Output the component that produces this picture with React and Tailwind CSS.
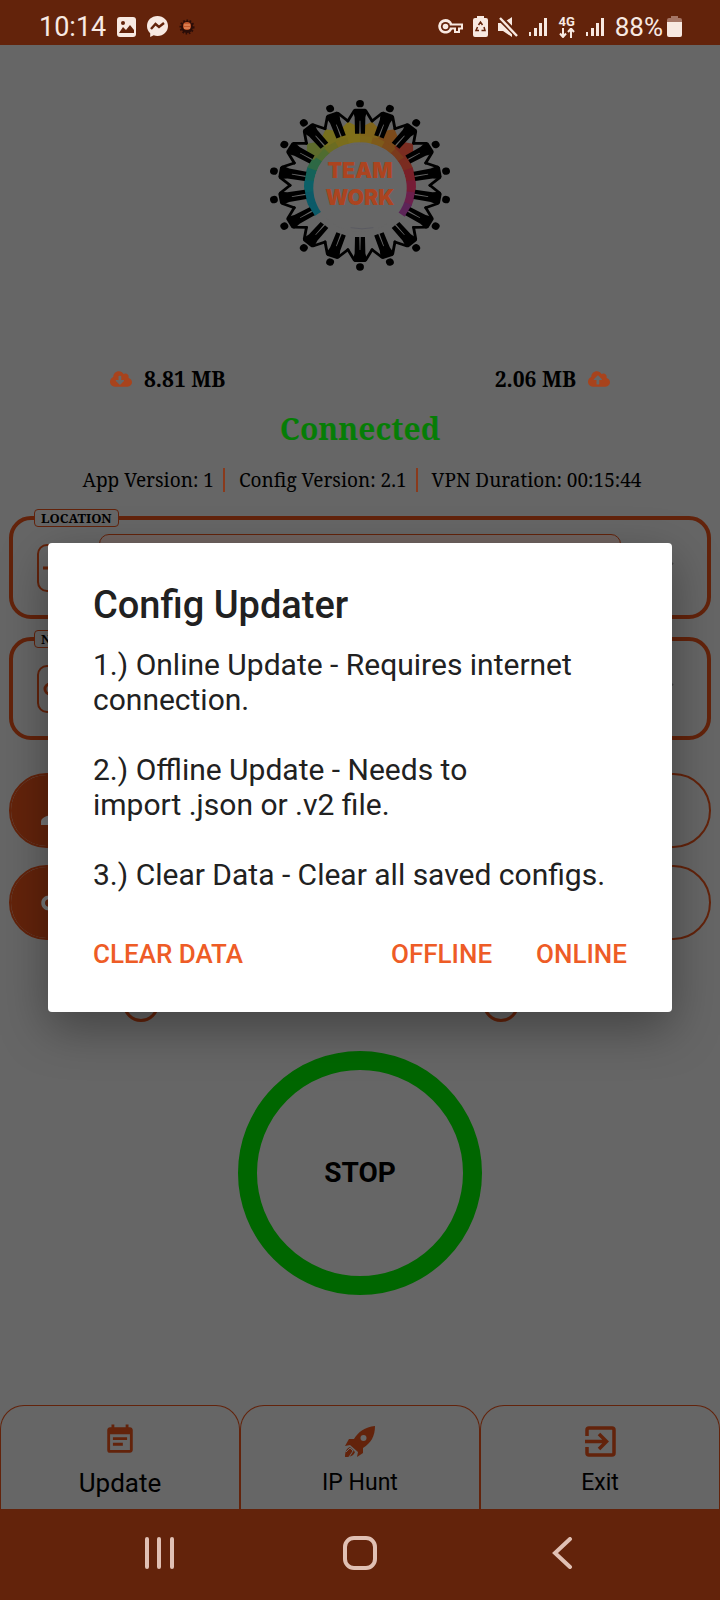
import React, { useState } from "react";
import { MdKey, MdPerson, MdEventNote } from "react-icons/md";
import { FaCloudDownloadAlt, FaCloudUploadAlt } from "react-icons/fa";

const people = Array.from({ length: 18 }, (_, i) => i * 20);

// rainbow ring, clockwise from lower left to lower right
const ringColors = [
  "#0b5a68", "#0b5a68", "#0b6068", "#146259", "#2d6844", "#4f6c30",
  "#6b6c22", "#7a6d1c", "#80701a", "#80681a", "#7e5a1a", "#7c4a1a",
  "#7a3a1c", "#7a2c20", "#7a1f28", "#761c36", "#6c1f4c", "#5c2458",
];

function polar(deg, r) {
  const a = (deg * Math.PI) / 180;
  return `${(Math.sin(a) * r).toFixed(1)} ${(-Math.cos(a) * r).toFixed(1)}`;
}

function Logo() {
  return (
    <svg width="183" height="177" viewBox="-273 -265 549 531">
      <g transform="scale(1.07 1)">
        {ringColors.map((color, i) => {
          const from = -126 + i * 14;
          return (
            <path
              key={i}
              d={`M${polar(from, 143)} A143 143 0 0 1 ${polar(from + 15, 143)}`}
              stroke={color}
              strokeWidth="28"
              fill="none"
            />
          );
        })}
        {[-50, -30, -10, 10, 30, 50].map((deg, i) => (
          <path
            key={deg}
            d={`M${polar(deg - 10, 150)} L${polar(deg - 7, 178)} L${polar(deg, 194)} L${polar(deg + 7, 178)} L${polar(deg + 10, 150)}Z`}
            fill={["#5d6b2c", "#77701e", "#80701a", "#80641a", "#7c4a1a", "#7a2c20"][i]}
          />
        ))}
        <circle cx="0" cy="8" r="131" fill="#666666" />
        {people.map((deg) => (
          <g key={deg} transform={`rotate(${deg})`}>
            <circle cx="0" cy="-245" r="11" fill="#000" />
            <path
              d="M-15 -230 H15 L20 -224 L15 -204 L14 -155 H2 L1 -194 H-1 L-2 -155 H-14 L-15 -204 L-20 -224Z"
              fill="#000"
            />
            <path
              d="M-34 -193 L-16 -224 M16 -224 L34 -193"
              stroke="#000"
              strokeWidth="8"
              strokeLinecap="round"
            />
          </g>
        ))}
      </g>
      <path d="M-28 127 Q6 134 40 127" stroke="#55555f" strokeWidth="2" fill="none" />
      <g
        className="font-['Inter',sans-serif] font-black"
        fontSize="64"
        fill="#ac4420"
        textAnchor="middle"
      >
        <text x="0" y="-22">TEAM</text>
        <text x="0" y="60">WORK</text>
      </g>
    </svg>
  );
}

function SignalIcon() {
  return (
    <svg width="19" height="20" viewBox="0 0 19 20" fill="#f8e9e2">
      <rect x="0" y="15" width="2" height="4" />
      <rect x="5" y="11" width="3" height="8" />
      <rect x="10" y="6" width="3" height="13" />
      <rect x="15" y="1" width="3" height="18" />
    </svg>
  );
}

function StatusBar() {
  return (
    <header className="flex h-[45px] items-center justify-between bg-[#63230b] pt-2 pr-[38px] pl-[39px] text-[27px] leading-8 text-[#f8e9e2]">
      <div className="flex items-center gap-[11px]">
        <span>10:14</span>
        <svg width="19" height="20" viewBox="0 0 19 20">
          <rect width="19" height="20" rx="3" fill="#f8e9e2" />
          <circle cx="6" cy="6" r="2" fill="#63230b" />
          <path d="M2 16 L6 10 L9 13 L13 8 L17 13 V16Z" fill="#63230b" />
        </svg>
        <svg width="21" height="21" viewBox="0 0 21 21">
          <path
            d="M10.500 0C4.500 0 0 4.300 0 10c0 3 1.200 5.400 3.200 7.200V21l3.500-1.700c1.200.4 2.500.6 3.800.6 6 0 10.500-4.300 10.500-9.900S16.500 0 10.500 0Z"
            fill="#f8e9e2"
          />
          <path d="M4 13 L8.500 8 L12 11 L17 7" stroke="#63230b" strokeWidth="2.400" fill="none" />
        </svg>
        <svg width="16" height="16" viewBox="-8 -8 16 16">
          <circle r="6" fill="#2a0d08" stroke="#2a0d08" strokeWidth="3" strokeDasharray="1.500 1.500" />
          <circle cy="-1" r="4" fill="#c4582c" />
          <path d="M-3 -2H3M-3 1H3" stroke="#f0a070" strokeWidth="1" />
        </svg>
      </div>
      <div className="flex items-center gap-[10px]">
        <svg width="25" height="15" viewBox="0 0 25 15">
          <path
            d="M7.500 0a7.300 7.300 0 1 0 6.600 10.500H16V14h6v-3.500h3V4.500H14.100A7.300 7.300 0 0 0 7.500 0Z"
            fill="#f8e9e2"
          />
          <path d="M12 6.500H23V8.500H20V12H18V8.500H12Z" fill="#63230b" />
          <circle cx="7.500" cy="7.500" r="4.600" fill="#63230b" />
          <circle cx="7.500" cy="7.500" r="2.800" fill="#f8e9e2" />
        </svg>
        <svg width="15" height="21" viewBox="0 0 15 21">
          <path d="M4 0H11V2H13Q15 2 15 4V19Q15 21 13 21H2Q0 21 0 19V4Q0 2 2 2H4Z" fill="#f8e9e2" />
          <path
            d="M5.500 9 L7.500 6 L9.500 9 M11 11 L12 14.500 H8.500 M6 14.500 H3 L4.500 11"
            stroke="#63230b"
            strokeWidth="1.500"
            fill="none"
          />
        </svg>
        <svg width="21" height="20" viewBox="0 0 21 20">
          <path d="M0 6H5L14 0V20L5 14H0Z" fill="#f8e9e2" />
          <path d="M1 0 L20 19" stroke="#63230b" strokeWidth="6" />
          <path d="M2 1 L19 19" stroke="#f8e9e2" strokeWidth="2.400" />
        </svg>
        <SignalIcon />
        <div className="flex flex-col items-center">
          <span className="text-[13px] leading-3 font-bold">4G</span>
          <svg width="18" height="10" viewBox="0 0 18 10">
            <path
              d="M5 0V9M2 5.500L5 9L8 5.500M13 10V1M10 4L13 0.500L16 4"
              stroke="#f8e9e2"
              strokeWidth="2"
              fill="none"
            />
          </svg>
        </div>
        <SignalIcon />
        <div className="flex items-center gap-1">
          <span className="text-[26px]">88%</span>
          <svg width="15" height="21" viewBox="0 0 15 21">
            <path d="M4 0H11V2H13Q15 2 15 4V7H0V4Q0 2 2 2H4Z" fill="#a57565" />
            <path d="M0 6H15V19Q15 21 13 21H2Q0 21 0 19Z" fill="#f8e9e2" />
          </svg>
        </div>
      </div>
    </header>
  );
}

function SelectCard({ label, id, children }) {
  return (
    <div className="relative flex h-[103px] items-center rounded-[22px] border-4 border-[#63230b] px-6">
      <label
        htmlFor={id}
        className="absolute -top-[11px] left-[21px] rounded-[4px] border border-[#63230b] bg-[#666666] px-[6px] font-['Noto_Serif','DejaVu_Serif_Condensed','DejaVu_Serif',serif] text-[13px] leading-4 font-bold"
      >
        {label}
      </label>
      <div className="flex h-12 w-12 items-center justify-center rounded-[10px] border-2 border-[#63230b] text-[#63230b]">
        {children}
      </div>
      <select
        id={id}
        className="mr-[62px] ml-[14px] h-[68px] flex-1 appearance-none rounded-[10px] border border-[#63230b] bg-[#6f6360]"
      />
      <svg className="absolute right-[33px]" width="26" height="14" viewBox="0 0 26 14">
        <path d="M2 12 L13 12 L25 2" stroke="#444" strokeWidth="2" fill="none" />
      </svg>
    </div>
  );
}

function RoundField({ name, icon }) {
  return (
    <div className="flex h-[75px] overflow-hidden rounded-full border-2 border-[#63230b] bg-[#666666]">
      <div className="-my-px -ml-px flex w-[90px] items-center justify-center bg-[#63230b] text-[#777777]">
        {icon}
      </div>
      <input className="min-w-0 flex-1 bg-transparent" type="text" aria-label={name} />
    </div>
  );
}

function UpdateDialog({ onClose }) {
  return (
    <div className="absolute inset-0 flex items-center px-12">
      <div
        role="dialog"
        aria-labelledby="dialog-title"
        className="w-full rounded-[4px] bg-white px-[45px] pt-10 pb-8 text-[#212121] shadow-[0_16px_48px_rgba(0,0,0,0.35)]"
      >
        <h2 id="dialog-title" className="text-[38px] leading-[44px] font-medium">
          Config Updater
        </h2>
        <div className="mt-5 text-[30px] leading-[35px]">
          <p>
            1.) Online Update - Requires internet connection.
          </p>
          <p className="mt-[35px]">
            2.) Offline Update - Needs to
            <br />
            import .json or .v2 file.
          </p>
          <p className="mt-[35px]">3.) Clear Data - Clear all saved configs.</p>
        </div>
        <div className="mt-9 flex items-center text-[26px] leading-[52px] font-medium text-[#ee5c26]">
          <button type="button" onClick={onClose}>CLEAR DATA</button>
          <button type="button" className="ml-auto" onClick={onClose}>OFFLINE</button>
          <button type="button" className="ml-11" onClick={onClose}>ONLINE</button>
        </div>
      </div>
    </div>
  );
}

function RocketIcon() {
  return (
    <svg width="31" height="31" viewBox="0 0 31 31">
      <path
        d="M30 0C20 1 13 6 9 13L4 13L0 20L5 19L13 26L12 31L18 27V22C26 17 30 10 30 0Z"
        fill="#63230b"
      />
      <circle cx="18.500" cy="12" r="3" fill="#666666" />
      <path
        d="M5 21C2 22 0 25 0 31C6 31 9 29 10 26"
        fill="#63230b"
      />
      <path d="M1 26L5 22L8 25L4 31" stroke="#666666" strokeWidth="1" fill="none" />
    </svg>
  );
}

function ExitIcon() {
  return (
    <svg width="31" height="31" viewBox="0 0 31 31" fill="none" stroke="#63230b" strokeWidth="3.500">
      <path d="M2 10V4Q2 2 4 2H27Q29 2 29 4V27Q29 29 27 29H4Q2 29 2 27V21" />
      <path d="M0 15.500H21M14 8L21.500 15.500L14 23" />
    </svg>
  );
}

const tabClass =
  "flex flex-1 flex-col items-center justify-end rounded-t-[24px] border border-b-0 border-[#63230b] pb-[10px] leading-8";

function App() {
  const [open, setOpen] = useState(true);

  return (
    <div className="flex min-h-screen flex-col bg-[#666666] font-['Roboto',sans-serif] text-black">
      <StatusBar />

      <div className="relative flex flex-1 flex-col">
        <main className="flex flex-1 flex-col px-[9px]">
          <div className="flex justify-center pt-[52px]">
            <Logo />
          </div>

          <div className="font-['Noto_Serif','DejaVu_Serif_Condensed','DejaVu_Serif',serif]">
            <div className="mt-[91px] flex justify-between px-[101px] text-[21px] leading-7 font-bold">
              <div className="flex items-center gap-3">
                <FaCloudDownloadAlt size={22} color="#a8431c" />
                <span>8.81 MB</span>
              </div>
              <div className="flex items-center gap-3">
                <span>2.06 MB</span>
                <FaCloudUploadAlt size={22} color="#a8431c" />
              </div>
            </div>
            <h1 className="mt-4 text-center text-[30px] leading-10 font-bold text-[#067d06]">
              Connected
            </h1>
            <div className="mt-[17px] flex items-center justify-center pl-1 text-[19px] leading-7">
              <span className="border-r-2 border-[#8a3a1c] pr-[9px] leading-6">App Version: 1</span>
              <span className="border-r-2 border-[#8a3a1c] pr-[9px] pl-[14px] leading-6">Config Version: 2.1</span>
              <span className="pl-[14px]">VPN Duration: 00:15:44</span>
            </div>
          </div>

          <div className="mt-[22px] flex flex-col gap-[18px]">
            <SelectCard label="LOCATION" id="location">
              <svg width="36" height="36" viewBox="0 0 36 36" stroke="currentColor" strokeWidth="3" fill="none">
                <path d="M0 18H36M18 0V36" />
                <circle cx="18" cy="18" r="11" />
              </svg>
            </SelectCard>
            <SelectCard label="NETWORK" id="network">
              <svg width="36" height="36" viewBox="0 0 36 36" stroke="currentColor" strokeWidth="3" fill="none">
                <circle cx="7" cy="18" r="5" />
                <path d="M12 18H34M27 18V25" />
              </svg>
            </SelectCard>
          </div>

          <div className="mt-[33px] flex flex-col gap-[17px]">
            <RoundField name="Username" icon={<MdPerson size={42} />} />
            <RoundField name="Password" icon={<MdKey size={30} />} />
          </div>

          <div className="-mx-[9px] mt-[46px] flex">
            {["left", "right"].map((side) => (
              <div key={side} className="flex-1 pl-[123px]">
                <input
                  type="radio"
                  name="mode"
                  aria-label={side}
                  className="block h-9 w-9 appearance-none rounded-full border-3 border-[#63230b]"
                />
              </div>
            ))}
          </div>

          <button
            type="button"
            className="mt-[29px] mb-10 h-[244px] w-[244px] self-center rounded-full border-[19px] border-[#006600] text-[28px] font-bold"
            onClick={() => setOpen(true)}
          >
            STOP
          </button>
        </main>

        <div className="flex h-[104px]">
          <button type="button" className={`${tabClass} gap-[10px] text-[26px]`} onClick={() => setOpen(true)}>
            <MdEventNote size={34} color="#63230b" />
            Update
          </button>
          <button type="button" className={`${tabClass} gap-[10px] text-[23px]`}>
            <RocketIcon />
            IP Hunt
          </button>
          <button type="button" className={`${tabClass} gap-[10px] text-[23px]`}>
            <ExitIcon />
            Exit
          </button>
        </div>

        {open && <UpdateDialog onClose={() => setOpen(false)} />}
      </div>

      <nav className="flex h-[91px] items-center justify-between bg-[#63230b] px-[142px] pb-[3px]">
        <button type="button" aria-label="Recent apps">
          <svg width="36" height="32" viewBox="0 0 36 32" stroke="#e0c0b4" strokeWidth="4" strokeLinecap="round">
            <path d="M5 2V30M17 2V30M30 2V30" />
          </svg>
        </button>
        <button type="button" aria-label="Home">
          <svg width="34" height="34" viewBox="0 0 34 34">
            <rect x="2" y="2" width="30" height="30" rx="9" stroke="#e0c0b4" strokeWidth="4" fill="none" />
          </svg>
        </button>
        <button type="button" aria-label="Back">
          <svg width="36" height="32" viewBox="0 0 36 32">
            <path d="M28 2L13 16L28 30" stroke="#e0c0b4" strokeWidth="4" strokeLinecap="round" fill="none" />
          </svg>
        </button>
      </nav>
    </div>
  );
}

export default App;
